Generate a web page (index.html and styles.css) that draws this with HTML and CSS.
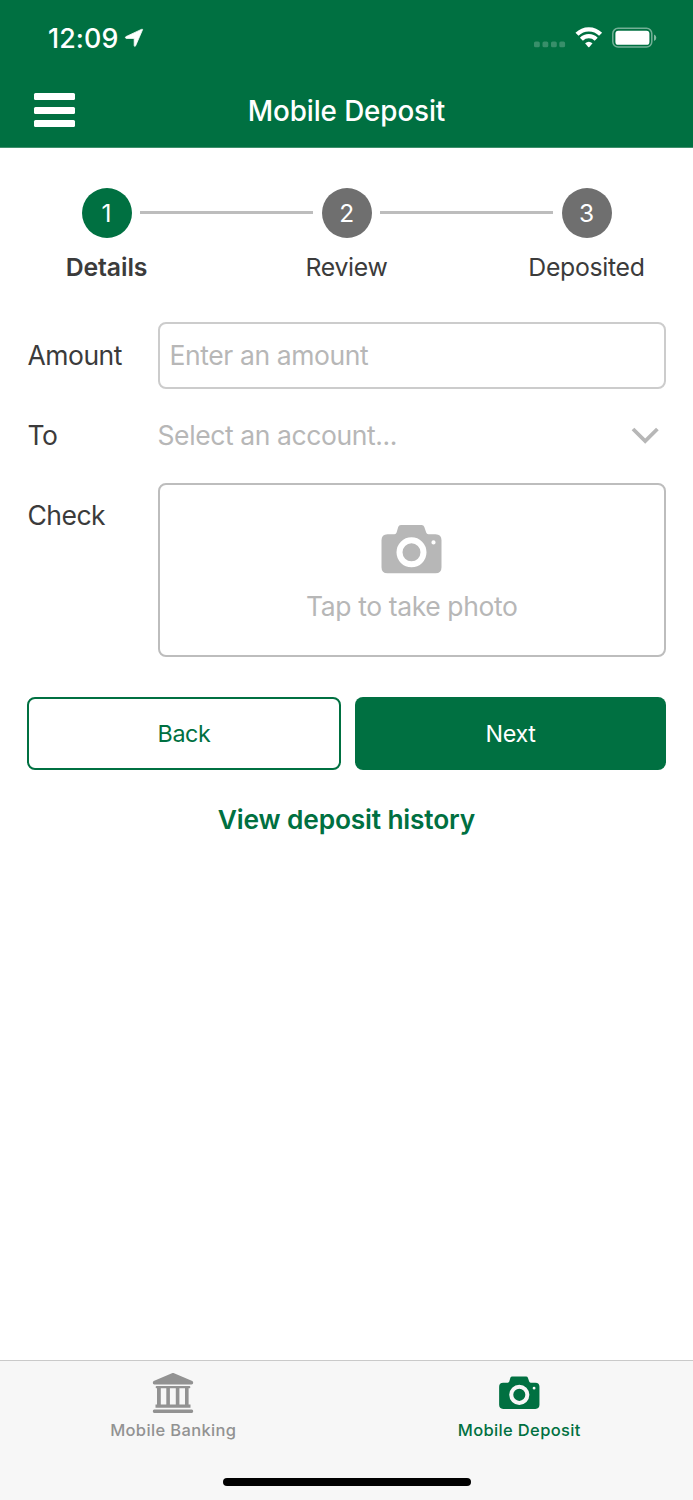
FILE: index.html
```html
<!DOCTYPE html>
<html lang="en">
<head>
<meta charset="utf-8">
<title>Mobile Deposit</title>
<link rel="stylesheet" href="styles.css">
</head>
<body>
<div class="app">
  <header class="header">
    <div class="status">
      <span class="time">12:09</span>
      <svg class="location" width="20" height="20" viewBox="0 0 20 20"><path d="M18.600 1.600 11.600 17.800Q10.600 19.200 10.200 17.600V10.400H2.200Q.6 9.700 1.800 8.700L17.400 1.400Q18.800 1 18.600 1.600Z" fill="#fff" stroke="#fff" stroke-width=".8" stroke-linejoin="round"/></svg>
      <svg class="signals" width="124" height="24" viewBox="0 0 124 24">
        <g fill="#fff" fill-opacity=".22"><rect x="1" y="15.500" width="5.800" height="5.800" rx="1.600"/><rect x="9.500" y="15.500" width="5.800" height="5.800" rx="1.600"/><rect x="18" y="15.500" width="5.800" height="5.800" rx="1.600"/><rect x="26.300" y="15.500" width="5.800" height="5.800" rx="1.600"/></g>
        <g fill="none" stroke="#fff" stroke-width="4.300"><path d="M44 8.300a16.600 16.600 0 0 1 23.600 0"/><path d="M48.400 13.200a10.600 10.600 0 0 1 14.800 0"/></g>
        <path d="M52.100 17.300a5.700 5.700 0 0 1 7.400 0l-3.100 3.700q-.6.700-1.200 0Z" fill="#fff"/>
        <rect x="79.800" y="2.300" width="39" height="18.800" rx="5.300" fill="none" stroke="#fff" stroke-opacity=".45" stroke-width="1.500"/>
        <rect x="82.400" y="4.800" width="34" height="14" rx="2.900" fill="#fff"/>
        <path d="M121 8.400q2.300 1 2.300 3.300T121 15Z" fill="#fff" fill-opacity=".5"/>
      </svg>
    </div>
    <div class="navbar">
      <button class="menu" aria-label="Menu"><i></i><i></i><i></i></button>
      <h1 class="title">Mobile Deposit</h1>
    </div>
  </header>

  <main class="content">
    <ol class="steps">
      <li class="step active"><span class="dot">1</span><span class="step-label">Details</span></li>
      <li class="line"></li>
      <li class="step"><span class="dot">2</span><span class="step-label">Review</span></li>
      <li class="line"></li>
      <li class="step"><span class="dot">3</span><span class="step-label">Deposited</span></li>
    </ol>

    <div class="form">
      <span class="label">Amount</span>
      <div class="input"><span>Enter an amount</span></div>
      <span class="label to">To</span>
      <div class="select"><span class="hint-account">Select an account...</span>
        <svg width="28" height="18" viewBox="0 0 28 18"><path d="m2 2 12.200 12L26.400 2" fill="none" stroke="#b7b7b7" stroke-width="3.800"/></svg>
      </div>
      <span class="label check">Check</span>
      <div class="photo">
        <svg width="61" height="49" viewBox="0 0 61 49"><path fill="#b7b7b7" fill-rule="evenodd" d="M20 0h20.500q2.200 0 2.800 1.900l1.900 5.700q.5 1.600 2.200 1.600h7.100q6 0 6 6v27q0 6-6 6h-48q-6 0-6-6v-27q0-6 6-6h6.900q1.700 0 2.200-1.600l1.600-5.700Q17.800 0 20 0ZM30.500 12.300a15 15 0 1 0 0 30 15 15 0 0 0 0-30Zm0 6a9 9 0 1 1 0 18 9 9 0 0 1 0-18ZM52.500 15.300a2.100 2.100 0 1 0 0 4.200 2.100 2.100 0 0 0 0-4.200Z"/></svg>
        <span class="hint-photo">Tap to take photo</span>
      </div>
    </div>

    <div class="actions">
      <button class="button outline">Back</button>
      <button class="button filled">Next</button>
    </div>
    <a class="history">View deposit history</a>
  </main>

  <footer class="tabbar">
    <nav class="tabs">
      <a class="tab"><svg width="42" height="42" viewBox="0 0 42 42" fill="#929292"><path d="M20.500 1q.5-.2 1 0l18.800 8q.9.500.9 1.800 0 1.600-1.600 1.600H2.400Q.8 12.400.8 10.800.8 9.500 1.700 9ZM4.500 14h33q.8 0 .8.900v.6q0 .8-.8.800h-33q-.8 0-.8-.8v-.6q0-.9.800-.9ZM5 16h3.800v17H5ZM14.300 16h3.600v17h-3.600ZM23.800 16h3.600v17h-3.600ZM33 16h3.600v17H33ZM3.500 32.600h35v3.100h-35ZM2.200 37.500h37.600q1.400 0 1.400 1.700 0 1.800-1.400 1.800H2.200Q.8 41 .8 39.200q0-1.700 1.400-1.700Z"/></svg><span class="tab-banking">Mobile Banking</span></a>
      <a class="tab selected"><svg width="42" height="42" viewBox="0 0 42 42"><g transform="translate(.8 4.500) scale(.672)"><path fill="#007041" fill-rule="evenodd" d="M20 0h20.500q2.200 0 2.800 1.900l1.900 5.700q.5 1.600 2.200 1.600h7.100q6 0 6 6v27q0 6-6 6h-48q-6 0-6-6v-27q0-6 6-6h6.900q1.700 0 2.200-1.600l1.600-5.700Q17.800 0 20 0ZM30.500 12.300a15 15 0 1 0 0 30 15 15 0 0 0 0-30Zm0 6a9 9 0 1 1 0 18 9 9 0 0 1 0-18ZM52.500 15.300a2.100 2.100 0 1 0 0 4.200 2.100 2.100 0 0 0 0-4.200Z"/></g></svg><span class="tab-deposit">Mobile Deposit</span></a>
    </nav>
    <div class="home"></div>
  </footer>
</div>
</body>
</html>
```
FILE: styles.css
```css
* { box-sizing: border-box; }
body { margin: 0; background: #fff; color: #3b3b3b; font-family: Inter, "Liberation Sans", sans-serif; }
.app { width: 693px; height: 1500px; display: flex; flex-direction: column; }
button { font: inherit; margin: 0; padding: 0; border: 0; background: none; }
svg { display: block; flex: none; }

.header { height: 148px; background: #007041; border-bottom: 1px solid #3f8f6c; color: #fff; }
.status { height: 73px; padding: 3px 36px 0 48px; display: flex; align-items: center; }
.time { font-size: 26.800px; letter-spacing: .100px; font-weight: 500; line-height: 32px; }
.location { margin-left: 6px; }
.signals { margin-left: auto; }
.navbar { height: 74px; display: grid; grid-template-columns: 107px 1fr 107px; align-items: center; }
.menu { width: 41px; margin-left: 33.500px; display: grid; gap: 6.500px; }
.menu i { height: 7px; border-radius: 1.500px; background: #fff; }
.title { margin: 2px 0 0; text-align: center; font-size: 27.800px; line-height: 34px; font-weight: 550; letter-spacing: -.100px; }

.content { flex: 1; padding: 40px 27px 0; }
.steps { margin: 0; padding: 0 54.500px; list-style: none; display: flex; align-items: flex-start; }
.step { width: 50px; display: flex; flex-direction: column; align-items: center; gap: 14px; white-space: nowrap; font-size: 24.800px; letter-spacing: -.300px; line-height: 30px; }
.dot { width: 50px; height: 50px; border-radius: 50%; background: #6f6f6f; color: #fff; text-align: center; line-height: 50px; font-size: 24.500px; }
.active { font-weight: 600; letter-spacing: -.100px; }
.active .dot { background: #007041; font-weight: 400; }
.line { flex: 1; height: 3px; margin: 23px 8.500px 0; background: #bdbdbd; }

.form { margin-top: 39.500px; display: grid; grid-template-columns: 130.500px 1fr; grid-template-rows: 67px 94px 174px; align-items: center; font-size: 26.500px; letter-spacing: -.400px; line-height: 32px; color: #b7b7b7; }
.label { padding-left: .500px; color: #3b3b3b; letter-spacing: -.500px; }
.to, .hint-account { margin-top: -1px; }
.check { align-self: start; margin-top: 16px; }
.input, .photo { align-self: stretch; border: 2px solid #ccc; border-radius: 8px; }
.input { display: flex; align-items: center; padding-left: 10px; padding-bottom: 1px; }
.select { display: flex; align-items: center; justify-content: space-between; padding-right: 7px; }
.photo { border-color: #bdbdbd; display: flex; flex-direction: column; align-items: center; padding-top: 40px; gap: 16.500px; }

.actions { margin-top: 40px; display: grid; grid-template-columns: 314px 311px; gap: 14px; }
.button { height: 73px; padding-top: 1px; border-radius: 8px; font-size: 23.300px; letter-spacing: -.350px; line-height: 28px; }
.outline { border: 2px solid #007041; color: #007041; }
.filled { background: #007041; color: #fff; }
.history { display: block; margin-top: 34px; text-align: center; color: #007041; font-size: 26.300px; letter-spacing: -.150px; line-height: 32px; font-weight: 600; }

.tabbar { height: 140px; background: #f7f7f7; border-top: 1px solid #cacaca; display: flex; flex-direction: column; align-items: center; }
.tabs { width: 100%; display: grid; grid-template-columns: 1fr 1fr; }
.tab { display: flex; flex-direction: column; align-items: center; padding-top: 11px; gap: 6px; font-size: 16.500px; letter-spacing: .350px; line-height: 20px; font-weight: 450; color: #929292; }
.selected { color: #007041; padding-right: 1px; }
.home { width: 248px; height: 8px; margin-top: 38px; border-radius: 4px; background: #000; }
```
